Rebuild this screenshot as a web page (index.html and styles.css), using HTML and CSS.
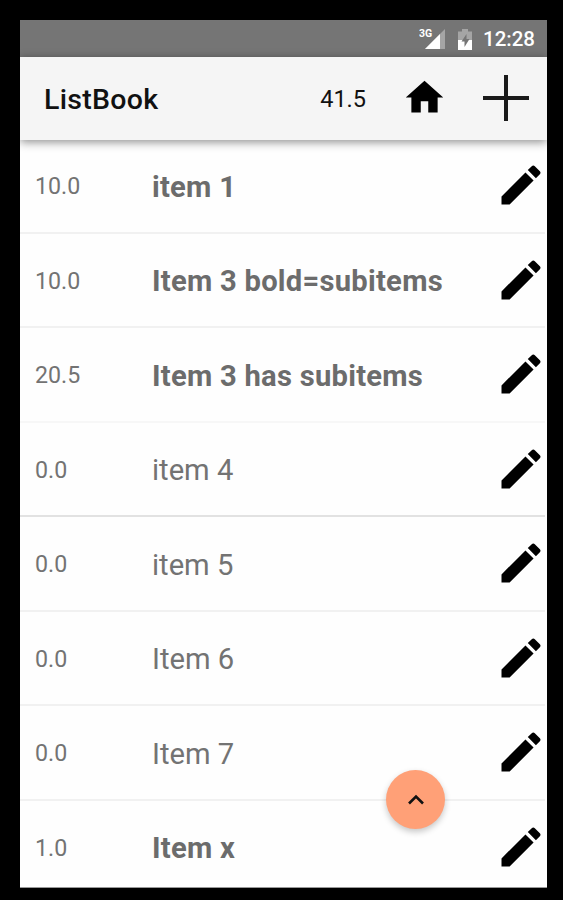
FILE: index.html
```html
<!DOCTYPE html>
<html lang="en">
<head>
  <meta charset="UTF-8" />
  <meta name="viewport" content="width=device-width, initial-scale=1.0"/>
  <title>ListBook</title>
  <link rel="stylesheet" href="styles.css">
</head>
<body>
  <!-- shared icon -->
  <svg class="defs" width="0" height="0">
    <symbol id="pencil" viewBox="0 0 24 24">
      <path d="M3 17.25V21h3.75L17.81 9.94l-3.75-3.75L3 17.25zM20.71 7.04c.39-.39.39-1.02 0-1.41l-2.34-2.34c-.39-.39-1.02-.39-1.41 0l-1.83 1.83 3.75 3.75 1.83-1.83z"/>
    </symbol>
  </svg>

  <div class="screen">
    <div class="status-bar">
      <svg class="signal" viewBox="0 0 26 22">
        <path d="M26 1v20H6z" fill="#a5a5a5"/>
        <path d="M21 6v15H6z" fill="#fff"/>
        <text x="0" y="9">3G</text>
      </svg>
      <svg class="battery" viewBox="0 0 14 21">
        <path d="M4 0h6v2.500h4V11H0V2.500h4z" fill="#a5a5a5"/>
        <path d="M0 11h14v10H0z" fill="#fff"/>
        <path d="M8.500 5L3.500 12.500h3V18l5-8h-3z" fill="#757575"/>
      </svg>
      <span class="clock">12:28</span>
    </div>

    <div class="app-bar">
      <h1 class="title">ListBook</h1>
      <span class="total">41.5</span>
      <svg class="home" viewBox="0 0 24 24"><path d="M10 20v-6h4v6h5v-8h3L12 3 2 12h3v8z"/></svg>
      <svg class="plus" viewBox="0 0 46 46"><path d="M23 0v46M0 23h46" stroke="#1a1a1a" stroke-width="4"/></svg>
    </div>

    <div class="list">
      <div class="row">
        <span class="amount">10.0</span>
        <span class="name bold">item 1</span>
        <svg class="edit"><use href="#pencil"/></svg>
      </div>
      <div class="row">
        <span class="amount">10.0</span>
        <span class="name bold">Item 3 bold=subitems</span>
        <svg class="edit"><use href="#pencil"/></svg>
      </div>
      <div class="row faint">
        <span class="amount">20.5</span>
        <span class="name bold">Item 3 has subitems</span>
        <svg class="edit"><use href="#pencil"/></svg>
      </div>
      <div class="row strong">
        <span class="amount">0.0</span>
        <span class="name">item 4</span>
        <svg class="edit"><use href="#pencil"/></svg>
      </div>
      <div class="row">
        <span class="amount">0.0</span>
        <span class="name">item 5</span>
        <svg class="edit"><use href="#pencil"/></svg>
      </div>
      <div class="row">
        <span class="amount">0.0</span>
        <span class="name">Item 6</span>
        <svg class="edit"><use href="#pencil"/></svg>
      </div>
      <div class="row">
        <span class="amount">0.0</span>
        <span class="name">Item 7</span>
        <svg class="edit"><use href="#pencil"/></svg>
      </div>
      <div class="row">
        <span class="amount">1.0</span>
        <span class="name bold">Item x</span>
        <svg class="edit"><use href="#pencil"/></svg>
      </div>
    </div>

    <button class="fab" aria-label="Up">
      <svg viewBox="0 0 18 12"><path d="M2 9.500l7-7 7 7" fill="none" stroke="#111" stroke-width="2.600"/></svg>
    </button>
  </div>
</body>
</html>
```
FILE: styles.css
```css
* {
    box-sizing: border-box;
}
body {
    margin: 0;
    padding: 20px 16px 0 20px;
    height: 900px;
    overflow: hidden;
    background-color: #000;
    font-family: Roboto, "Liberation Sans", sans-serif;
}
.defs {
    position: absolute;
}
.screen {
    position: relative;
    width: 527px;
    height: 868px;
    overflow: hidden;
    background-color: #fefefe;
    border-bottom: 1px solid #999;
}
.status-bar {
    display: flex;
    align-items: center;
    justify-content: flex-end;
    height: 37px;
    padding: 1px 12px 0 0;
    background-color: #757575;
    color: #fff;
}
.signal {
    width: 26px;
    height: 22px;
    margin-right: 13px;
}
.signal text {
    font-size: 10.5px;
    font-weight: bold;
    fill: #fff;
}
.battery {
    width: 14px;
    height: 21px;
    margin-right: 11px;
}
.clock {
    font-size: 20.5px;
    font-weight: 500;
}
.app-bar {
    position: relative;
    display: flex;
    align-items: center;
    height: 83px;
    padding: 0 18px 2px 24px;
    background-color: #f5f5f5;
    box-shadow: 0 2px 9px rgba(0, 0, 0, 0.45);
}
.title {
    flex: 1;
    margin: 0;
    padding-top: 4px;
    font-size: 28.5px;
    font-weight: 500;
    letter-spacing: 0.3px;
    color: #111;
}
.total {
    padding-top: 2px;
    font-size: 23.5px;
    color: #111;
}
.home {
    width: 45px;
    height: 45px;
    margin: 0 36px;
}
.plus {
    width: 46px;
    height: 46px;
}
.list {
    margin-top: -1px;
}
.row {
    display: flex;
    align-items: center;
    height: 94.5px;
    margin-right: 2px;
    padding-left: 15px;
    border-bottom: 2px solid #f1f1f1;
    color: #737373;
}
.row.faint {
    border-bottom-color: #f7f7f7;
}
.row.strong {
    border-bottom-color: #e2e2e2;
}
.row:last-child {
    border-bottom-color: transparent;
}
.amount {
    width: 117px;
    padding-top: 2px;
    font-size: 23.2px;
}
.name {
    flex: 1;
    padding-top: 3px;
    font-size: 29.2px;
}
.bold {
    font-weight: bold;
    letter-spacing: 0.25px;
    color: #6c6c6c;
}
.edit {
    width: 52px;
    height: 52px;
    margin-right: -2px;
}
.fab {
    position: absolute;
    right: 102px;
    bottom: 58px;
    display: flex;
    align-items: center;
    justify-content: center;
    width: 59px;
    height: 59px;
    padding: 0;
    border: none;
    border-radius: 50%;
    background-color: #ffa077;
    box-shadow: 0 3px 6px rgba(0, 0, 0, 0.22);
}
.fab svg {
    width: 18px;
    height: 12px;
}
```
